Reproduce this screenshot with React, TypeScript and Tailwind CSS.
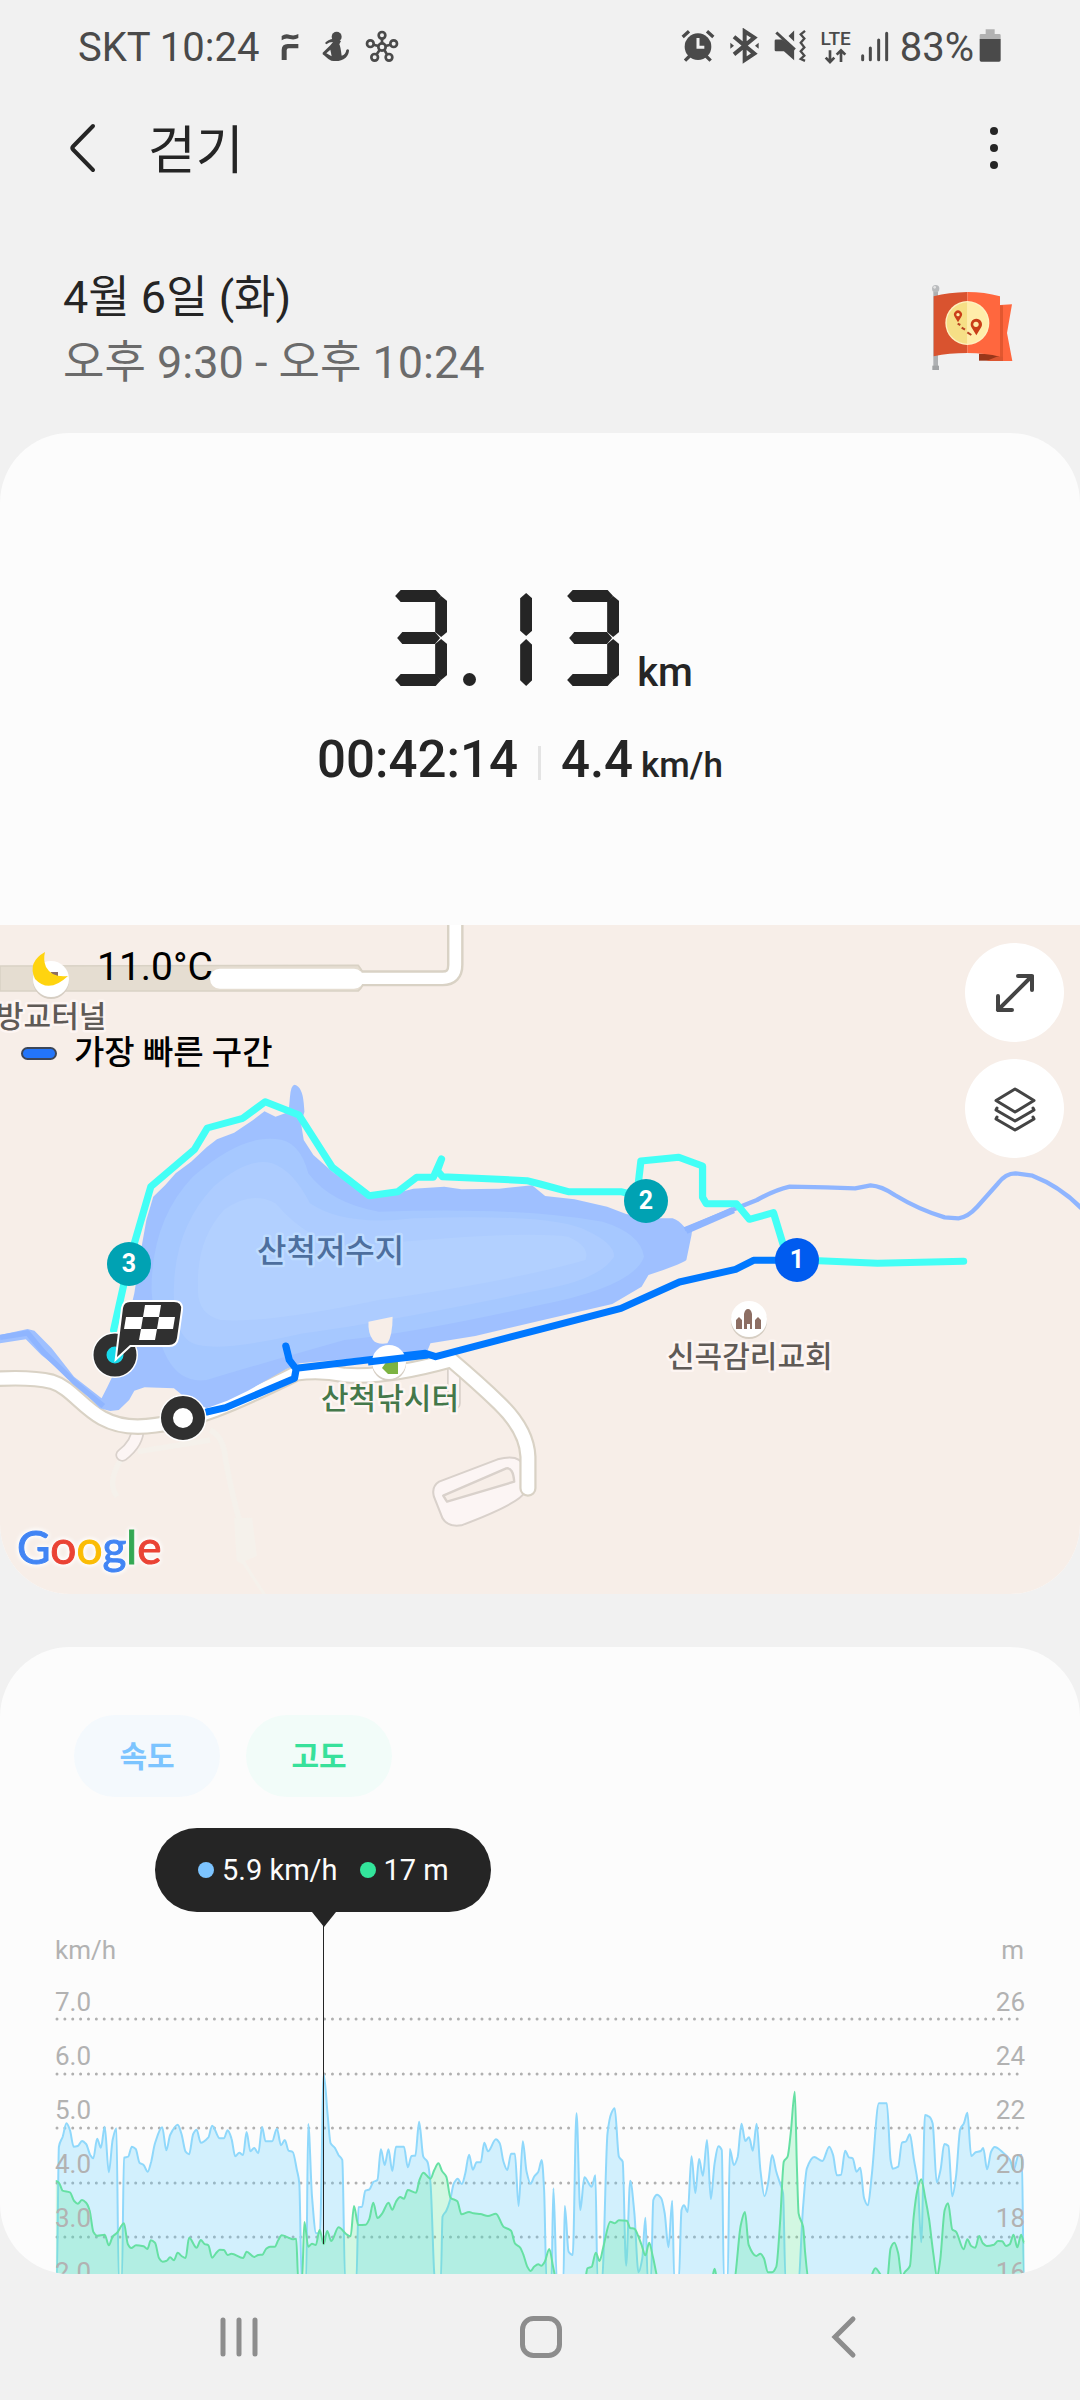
import React from "react";

type Point = [number, number];

/* Chart samples, in the plot's own sample grid (3136 units wide). */
const speedFirst: Point[] = [[165,900],[171,500],[182,470],[193,430],[203,450],[214,500],[226,498],[238,483],[250,492],[262,525],[271,535],[282,476],[293,503],[304,440],[316,577],[327,480],[338,445],[345,900],[354,900],[360,533],[372,530],[383,500],[394,507],[405,548],[417,555],[429,575],[439,545],[450,490],[471,442],[483,511],[494,465],[516,434],[527,462],[539,515],[549,523],[561,462],[571,449],[583,488],[605,472],[616,437],[638,475],[650,475],[661,451],[672,475],[683,529],[695,518],[706,525],[716,456],[727,514],[738,504],[750,520],[761,441],[771,484],[790,484],[804,446],[816,496],[827,480],[838,512],[850,516],[862,570],[869,610],[876,900],[889,900],[895,432],[906,650],[918,760],[929,760],[940,283],[951,400],[960,490],[972,503],[983,525],[994,540],[1002,900],[1035,900],[1041,682],[1051,680],[1061,632],[1073,628],[1084,606],[1096,600],[1106,508],[1117,555],[1128,508],[1139,573],[1150,500],[1173,500],[1184,562],[1195,528],[1206,527],[1217,425],[1229,530],[1241,545],[1250,610],[1263,900],[1280,900],[1285,710],[1296,692],[1307,660],[1318,610],[1329,596],[1341,612],[1351,580],[1362,524],[1373,569],[1384,547],[1396,547],[1406,488],[1417,514],[1440,478],[1451,490],[1462,545],[1473,570],[1484,521],[1495,521],[1506,678],[1518,484],[1529,575],[1541,611],[1551,590],[1563,575]];
const speedSecond: Point[] = [[5,780],[12,870],[19,1140],[33,1140],[39,865],[49,1140],[68,1140],[72,918],[83,1055],[95,1065],[106,640],[117,930],[129,832],[150,860],[161,826],[167,1140],[180,1140],[196,700],[207,640],[217,625],[229,770],[240,785],[250,1097],[262,842],[274,940],[286,1117],[297,1075],[306,953],[313,1140],[322,1140],[329,900],[340,884],[352,895],[362,940],[373,1042],[384,902],[390,1140],[403,1140],[411,930],[418,916],[429,936],[440,769],[451,879],[462,777],[473,827],[485,720],[496,897],[507,790],[518,739],[528,750],[534,1140],[545,1140],[551,747],[563,795],[574,770],[585,671],[596,723],[607,712],[618,752],[629,671],[640,810],[652,889],[663,845],[674,765],[686,815],[697,850],[706,880],[713,1140],[750,1140],[764,920],[775,805],[796,771],[820,783],[840,740],[851,765],[862,826],[874,824],[886,752],[897,772],[908,775],[919,815],[930,803],[941,895],[952,916],[963,830],[984,610],[1007,610],[1018,780],[1024,806],[1040,800],[1051,728],[1062,725],[1074,703],[1085,775],[1097,850],[1107,1027],[1118,645],[1130,650],[1140,670],[1152,847],[1163,810],[1174,732],[1186,738],[1197,889],[1208,830],[1220,688],[1231,670],[1241,638],[1252,768],[1265,757],[1280,753],[1287,744],[1298,808],[1310,755],[1320,741],[1345,758],[1365,780],[1375,810],[1390,765],[1399,765],[1405,1140]];
const heightFirst: Point[] = [[162,603],[171,608],[182,632],[203,637],[215,662],[226,671],[238,660],[250,668],[260,690],[271,755],[282,767],[304,764],[316,796],[327,770],[340,758],[360,730],[371,792],[381,804],[395,796],[417,799],[428,807],[438,781],[450,788],[462,835],[472,845],[484,842],[494,832],[505,841],[516,818],[527,828],[539,834],[549,773],[571,803],[583,780],[594,792],[605,796],[616,833],[627,820],[638,809],[650,810],[661,825],[672,821],[706,834],[716,815],[738,831],[750,825],[762,824],[773,806],[784,800],[798,800],[808,780],[818,766],[838,773],[850,778],[860,776],[866,900],[877,900],[884,726],[895,800],[906,791],[917,795],[928,750],[940,793],[950,753],[962,783],[983,742],[1005,762],[1018,769],[1028,678],[1040,735],[1062,734],[1072,718],[1084,668],[1096,714],[1110,700],[1128,668],[1139,689],[1150,665],[1162,651],[1173,656],[1184,630],[1208,638],[1218,600],[1229,578],[1250,596],[1261,570],[1273,550],[1284,574],[1296,590],[1308,653],[1328,664],[1340,703],[1362,696],[1375,700],[1395,702],[1417,708],[1440,701],[1462,740],[1484,752],[1495,790],[1510,802],[1520,825],[1532,862],[1541,873],[1551,860],[1563,853]];
const heightSecond: Point[] = [[4,1097],[14,1085],[27,1047],[38,1100],[48,1140],[130,1140],[138,1105],[150,1100],[162,1058],[173,1083],[184,1040],[204,965],[217,970],[229,961],[252,962],[262,984],[274,986],[284,1005],[295,1035],[306,1066],[317,1028],[328,1072],[345,1140],[498,1140],[507,1106],[515,1140],[563,1140],[583,975],[595,936],[606,1035],[628,1068],[640,1061],[650,1075],[662,1117],[674,1117],[686,1100],[697,970],[708,785],[719,770],[728,700],[740,575],[746,800],[751,940],[764,980],[770,1060],[780,1140],[955,1140],[974,1105],[990,1125],[1008,1140],[1018,1045],[1029,1028],[1040,1060],[1050,1130],[1060,1115],[1074,1098],[1085,950],[1096,870],[1107,838],[1118,890],[1130,960],[1142,1060],[1153,1130],[1162,1080],[1175,930],[1185,910],[1197,988],[1208,995],[1230,1048],[1241,1018],[1252,1038],[1264,1043],[1275,1008],[1286,1030],[1297,1038],[1318,1034],[1330,1023],[1342,1024],[1353,1038],[1364,1033],[1375,1004],[1386,1042],[1397,1004],[1406,1028]];

const join = (first: Point[], second: Point[]): Point[] =>
  [...first, ...second.map(([x, y]): Point => [x + 1568, y - 240])].map(
    ([x, y]): Point => [(x * 1080) / 3136, y / 3 + 152],
  );

/* Monotone cubic curve: flat at every local extreme. */
function curve(points: Point[]): string {
  const slope = points.map((_, i) => {
    if (i === 0 || i === points.length - 1) return 0;
    const a = (points[i][1] - points[i - 1][1]) / (points[i][0] - points[i - 1][0]);
    const b = (points[i + 1][1] - points[i][1]) / (points[i + 1][0] - points[i][0]);
    return a * b <= 0 ? 0 : (2 * a * b) / (a + b);
  });
  let d = `M${points[0][0].toFixed(1)} ${points[0][1].toFixed(1)}`;
  for (let i = 1; i < points.length; i++) {
    const [x0, y0] = points[i - 1];
    const [x1, y1] = points[i];
    const h = (x1 - x0) / 3;
    d += `C${(x0 + h).toFixed(1)} ${(y0 + slope[i - 1] * h).toFixed(1)} ${(x1 - h).toFixed(1)} ${(y1 - slope[i] * h).toFixed(1)} ${x1.toFixed(1)} ${y1.toFixed(1)}`;
  }
  return d;
}

const speedLine = curve(join(speedFirst, speedSecond));
const heightLine = curve(join(heightFirst, heightSecond));

const rows = [
  { speed: "7.0", height: "26" },
  { speed: "6.0", height: "24" },
  { speed: "5.0", height: "22" },
  { speed: "4.0", height: "20" },
  { speed: "3.0", height: "18" },
  { speed: "2.0", height: "16" },
];

function StatusBar() {
  return (
    <div className="flex items-center justify-between pt-6 pr-[79px] pl-[78px] text-[40px] leading-[48px] text-[#4a4a4a]">
      <div className="flex items-center">
        <span>SKT 10:24</span>
        <svg viewBox="656 54 66 120" className="ml-5 h-10 w-[22px]" fill="currentColor" aria-hidden="true">
          <path d="M664 78q12-9 25-3 13 4 25-3v12q-12 7-25 3-13-5-25 4zM664 150v-30q0-18 18-18h32v13h-29q-6 0-6 6v29z" />
        </svg>
        <svg viewBox="786 54 90 120" className="ml-5 h-10 w-[30px]" fill="currentColor" aria-hidden="true">
          <circle cx="833" cy="80" r="15" />
          <path d="M824 86q-18 2-26 13l4 4q8-7 20-7l-8 10-23 22q-2 5 4 8 12 12 22 16 26 5 43-9 10-9 10-23-4-4-8 0-2 14-14 17-4-30-7-34l5-10z" />
          <path d="M802 130l12-11 4 20z" fill="#f1f1f1" />
        </svg>
        <svg viewBox="920 54 102 120" className="ml-[14px] h-10 w-[34px]" fill="none" stroke="currentColor" strokeWidth="8" aria-hidden="true">
          <circle cx="971" cy="111" r="11" />
          <circle cx="971" cy="76" r="10" /><circle cx="936" cy="101" r="10" /><circle cx="1006" cy="101" r="10" />
          <circle cx="949" cy="142" r="10" /><circle cx="992" cy="142" r="10" />
          <path d="M971 86v14M946 104l14 4M996 104l-14 4M955 133l9-13M986 133l-8-13" />
        </svg>
      </div>
      <div className="flex items-center">
        <svg viewBox="120 54 102 120" className="h-10 w-[34px]" fill="none" stroke="currentColor" aria-hidden="true">
          <circle cx="171" cy="110" r="40" fill="currentColor" stroke="none" />
          <path d="M125 81l19-17M217 81l-19-17M132 152l14-14M209 152l-14-14" strokeWidth="10" />
          <path d="M171 84v28h19" stroke="#f1f1f1" strokeWidth="9" />
        </svg>
        <svg viewBox="264 54 93 120" className="ml-[14px] h-10 w-[31px]" fill="none" stroke="currentColor" strokeWidth="12" aria-hidden="true">
          <path d="M279 80l61 51-29 19V64l29 19-61 50" />
          <path d="M268 98l11 9-11 9zM353 98l-11 9 11 9z" fill="currentColor" stroke="none" />
        </svg>
        <svg viewBox="398 54 100 120" className="ml-[14px] h-10 w-[33px]" fill="none" stroke="currentColor" aria-hidden="true">
          <path d="M404 88h18l37 30v33l-31-27h-24q-4 0-4-4V92q0-4 4-4zM442 78l17-17v33z" fill="currentColor" stroke="none" />
          <path d="M405 67l56 52" strokeWidth="9" />
          <path d="M492 62l-13 11 11 12-11 13 11 14-11 12 11 13-11 10 13 6" strokeWidth="7" />
        </svg>
        <div className="ml-[13px] flex h-10 flex-col items-center text-[19px] leading-[18px] font-medium">
          <span className="mt-[2px]">LTE</span>
          <svg viewBox="550 114 70 48" className="h-4 w-6" fill="none" stroke="currentColor" strokeWidth="8" aria-hidden="true">
            <path d="M567 121v34M554 143l13 13 13-13M600 156v-34M587 134l13-13 13 13" />
          </svg>
        </div>
        <svg viewBox="660 54 90 120" className="ml-[9px] h-10 w-[30px]" stroke="currentColor" strokeWidth="9" strokeLinecap="round" aria-hidden="true">
          <path d="M668 137v12M691 114v35M716 90v59M740 70v79" />
        </svg>
        <span className="ml-[10px]">83%</span>
        <svg viewBox="1018 54 66 120" className="ml-[5px] h-10 w-[22px]" aria-hidden="true">
          <path d="M1020 88V76q0-4 4-4h14V58h27v14h14q4 0 4 4v12z" fill="#b2b2b2" />
          <path d="M1020 87h63v63q0 5-5 5h-53q-5 0-5-5z" fill="#4a4a4a" />
        </svg>
      </div>
    </div>
  );
}

function FlagBadge() {
  return (
    <svg viewBox="90 66 252 270" className="mt-[17px] h-[90px] w-[84px] self-start" role="img" aria-label="경로 목표">
      <path d="M100 96h14v224h-14z" fill="#aeb0b2" />
      <path d="M97 317h20v13H97z" fill="#a1a3a5" />
      <circle cx="107" cy="86" r="11" fill="#b9bbbd" />
      <circle cx="104" cy="82" r="4" fill="#e4e4e4" />
      <path d="M290 136l46-3-15 86 16 84h-47z" fill="#ff673e" />
      <path d="M299 136h10v166h-10z" fill="#e2572f" />
      <path d="M237 281h62v21h-62z" fill="#99371a" />
      <path d="M290 290h19v13h-50z" fill="#db5530" />
      <path d="M101 109q45-12 101-13v183q-55 0-101 10z" fill="#d9532f" />
      <path d="M202 96q52 0 98 13v181q-44-11-98-11z" fill="#ff673e" />
      <circle cx="202" cy="189" r="66" fill="#fff0c0" />
      <path d="M202 127a62 62 0 0 0 0 124z" fill="#f6df86" />
      <path d="M202 127a62 62 0 0 1 0 124z" fill="#ffedaa" />
      <path d="M174 187l-10-17a12 12 0 1 1 20 0zM229 226l-15-25a17 17 0 1 1 30 0z" fill="#ca3e18" />
      <circle cx="174" cy="164" r="5" fill="#ffedaa" />
      <circle cx="228" cy="193" r="8" fill="#ffedaa" />
      <path d="M173 191l8 4M185 203l10 6M202 217l12 8" stroke="#b94422" strokeWidth="6" />
    </svg>
  );
}

const segH = "[clip-path:polygon(0_50%,12%_0,88%_0,100%_50%,88%_100%,12%_100%)]";
const segV = "[clip-path:polygon(50%_0,100%_12%,100%_88%,50%_100%,0_88%,0_12%)]";

function Three() {
  return (
    <div className="relative h-24 w-[52px]">
      <i className={`absolute top-0 left-0 h-3 w-[46px] bg-[#252525] ${segH}`} />
      <i className={`absolute top-[42px] left-[2px] h-3 w-[43px] bg-[#252525] ${segH}`} />
      <i className={`absolute bottom-0 left-0 h-3 w-[46px] bg-[#252525] ${segH}`} />
      <i className={`absolute top-[6px] right-0 h-[41px] w-3 bg-[#252525] ${segV}`} />
      <i className={`absolute right-0 bottom-[6px] h-[41px] w-3 bg-[#252525] ${segV}`} />
    </div>
  );
}

function One() {
  return (
    <div className="flex h-24 flex-col justify-between pt-[3px]">
      <i className={`h-[43px] w-3 bg-[#252525] ${segV}`} />
      <i className={`h-[47px] w-3 bg-[#252525] ${segV}`} />
    </div>
  );
}

function Summary() {
  return (
    <div className="flex flex-col items-center pt-[157px] pb-[129px] font-medium text-[#252525]">
      <div className="flex items-end pl-2">
        <span className="sr-only">3.13</span>
        <div className="flex items-end" aria-hidden="true">
          <Three />
          <i className="ml-4 size-[13px] rounded-full bg-[#252525]" />
          <div className="ml-11"><One /></div>
          <div className="ml-[35px]"><Three /></div>
        </div>
        <span className="ml-[18px] text-[40px] leading-[26px]">km</span>
      </div>
      <div className="mt-11 flex items-baseline pr-10 leading-[60px]">
        <span className="text-[51px]">00:42:14</span>
        <i className="mx-5 h-[34px] w-[3px] self-center bg-[#e4e4e4]" />
        <span className="text-[51px]">4.4</span>
        <span className="ml-2 text-[35px]">km/h</span>
      </div>
    </div>
  );
}

function Terrain() {
  return (
    <svg viewBox="0 45 3136 2007" preserveAspectRatio="none" className="absolute inset-0 h-full w-full" fill="none" strokeLinejoin="round" aria-hidden="true">
      {/* footpaths */}
      <g stroke="#f5f1eb" strokeWidth="16">
        <path d="M400 1625L610 1590M350 1650Q310 1720 340 1760M610 1560Q650 1580 655 1650Q675 1760 695 1830" />
        <path d="M680 1825l52-2 14 115-35 15 30 50 32 50-8 5-60-95-18-10z" fill="#f5f1eb" stroke="none" />
      </g>
      {/* tunnel and upper road */}
      <path d="M0 168L1040 166Q1058 190 1058 206Q1055 232 1040 243L0 243z" fill="#e5ddd1" stroke="#d9d2c5" strokeWidth="5" />
      <path d="M1040 205H1285Q1322 205 1322 165V30" stroke="#d9d2c5" strokeWidth="48" />
      <path d="M1040 205H1285Q1322 205 1322 165V30" stroke="#fff" strokeWidth="34" />
      <rect x="610" y="176" width="446" height="60" rx="28" fill="#fff" />
      {/* minor lanes */}
      <path d="M400 1555Q400 1600 355 1635M1318 1360V1480" stroke="#d9d1cb" strokeWidth="40" strokeLinecap="round" />
      <path d="M400 1555Q400 1600 355 1635M1318 1360V1480" stroke="#fcf5f4" strokeWidth="30" strokeLinecap="round" />
      <path d="M1275 1715L1445 1648Q1530 1625 1522 1700L1525 1745Q1510 1780 1340 1846Q1300 1852 1285 1825L1260 1760Q1252 1730 1275 1715z" fill="#fcf5f4" stroke="#d9d1cb" strokeWidth="6" />
      <path d="M1287 1757L1470 1675Q1490 1672 1493 1715L1298 1775z" fill="#f7eee8" stroke="#d9d1cb" strokeWidth="7" />
      {/* lakeside road */}
      <g>
        <path d="M-20 1407Q90 1400 150 1415C230 1440 260 1550 400 1550C560 1545 720 1460 860 1390Q930 1380 1000 1395Q1120 1405 1310 1350Q1390 1420 1450 1480Q1530 1560 1533 1640V1735" stroke="#d9d2c5" strokeWidth="50" strokeLinecap="round" />
        <path d="M-20 1407Q90 1400 150 1415C230 1440 260 1550 400 1550C560 1545 720 1460 860 1390Q930 1380 1000 1395Q1120 1405 1310 1350Q1390 1420 1450 1480Q1530 1560 1533 1640V1735" stroke="#fff" strokeWidth="37" strokeLinecap="round" />
      </g>
      {/* lake */}
      <path d="M413 1000L425 930L445 860L480 825L510 790L555 755L600 712L630 688L680 668L735 630L768 604L800 620L838 606L842 560Q845 524 856 524Q878 530 882 580L884 605L874 640L882 690L910 735L965 785L1072 862L1155 848L1200 836L1290 830L1340 838L1450 836L1545 826L1583 858L1668 868L1763 890L1818 912L1898 925L1953 925Q1970 930 1988 952L2012 945L2008 975L1993 1050Q1980 1062 1883 1095L1863 1130L1778 1182L1568 1232L1380 1278L1250 1300L1240 1325L870 1360L830 1378L720 1442L660 1472L600 1495L540 1465L505 1435L420 1432L390 1442L375 1470L345 1500L320 1503L290 1495L210 1410L120 1335L75 1288L0 1300V1275L80 1257L100 1262L150 1315L215 1400L295 1465L312 1430L340 1370L390 1150z" fill="#9fc0ff" />
      <path d="M0 1282L80 1269L125 1325L215 1415L300 1488" stroke="#8fb5ff" strokeWidth="16" />
      <path d="M440 1140Q440 930 560 800Q700 675 800 687Q870 690 895 790Q960 880 1100 905Q1500 890 1750 935Q1860 970 1870 1040Q1840 1130 1568 1185Q1200 1270 1000 1290Q760 1360 600 1410Q460 1430 440 1140z" fill="#a6c8ff" />
      <path d="M505 1130Q510 950 620 830Q720 740 790 760Q850 780 900 880Q1000 950 1200 925Q1600 910 1700 960Q1785 1000 1783 1040Q1740 1110 1568 1140Q1100 1240 880 1270Q630 1330 560 1300Q500 1270 505 1130z" fill="#adccff" />
      <path d="M575 1130Q570 990 650 900Q730 840 800 880Q900 1000 1020 1010Q1500 960 1650 980Q1715 1010 1700 1050Q1500 1110 1100 1170Q780 1240 640 1230Q570 1210 575 1130z" fill="#b2d0ff" />
      <path d="M1070 1235l70-15q0 55-15 80-30 5-42-10-15-20-13-55z" fill="#f7eee8" />
      {/* stream */}
      <path d="M1988 958L2138 895L2198 870Q2250 840 2293 830L2398 832L2483 835L2528 826Q2560 828 2598 855Q2670 900 2743 922L2783 925Q2810 922 2838 890L2898 820Q2920 790 2948 790L2998 797Q3080 830 3140 895" stroke="#8fb5ff" strokeWidth="13" />
      <path d="M1992 962L2130 900" stroke="#8fb5ff" strokeWidth="20" />
      {/* walked route */}
      <g stroke="#43fff6" strokeWidth="21" strokeLinecap="round">
        <path d="M330 1260L358 1130L390 1000L438 830L565 718L602 654L705 625L770 575L868 615L965 772L1072 857L1155 845L1210 802L1258 802L1282 747L1270 782L1285 800L1530 812L1568 822L1650 845H1803L1830 852" />
        <path d="M1854 815L1861 753L1971 742L2040 768V862L2051 881H2138L2176 928L2246 908L2276 1010" />
        <path d="M2378 1052L2548 1060L2798 1054" />
      </g>
      <path d="M600 1506L655 1493L855 1405L860 1377L840 1350L830 1308M860 1377V1375L1235 1330L1265 1340L1568 1258L1803 1195L1973 1116L2136 1078L2188 1051H2270" stroke="#0078ff" strokeWidth="21" strokeLinecap="round" />
    </svg>
  );
}

function MapMarks() {
  const halo = { paintOrder: "stroke" as const };
  return (
    <svg viewBox="0 925 1080 669" className="absolute inset-0 h-full w-full" role="img" aria-label="산척저수지 산책 경로 지도">
      {/* points of interest */}
      <g>
        <circle cx="51" cy="981" r="18" fill="#d6cec3" />
        <circle cx="51" cy="979" r="18" fill="#fff" />
        <path d="M51 972h7v5h-7z" fill="#8d6e63" />
        <path d="M45 952Q27 962 35 979Q49 994 68 976Q52 978 46 967Q43 960 45 952z" fill="#ffd40f" />
        <circle cx="389" cy="1364" r="17" fill="#d6cec3" />
        <circle cx="389" cy="1362" r="17" fill="#fff" />
        <path d="M398 1361v13h-10l-6-6 5-7z" fill="#7cb342" />
        <circle cx="749" cy="1321" r="18" fill="#d6cec3" />
        <circle cx="749" cy="1319" r="18" fill="#fff" />
        <path d="M736 1329v-9l3-3 3 3v9zM755 1329v-9l3-3 3 3v9zM744 1329v-15q1-5 4-5t4 5v15h-2v-5h-3v5z" fill="#8d6e63" />
        <path d="M368 1362L428 1355" stroke="#0078ff" strokeWidth="7" />
      </g>
      <g style={halo} strokeWidth="5" strokeLinejoin="round" fontSize="30" fontWeight="500">
        <text x="-4" y="1027" fill="#5f5a56" stroke="#fdf5f2">방교터널</text>
        <text x="257" y="1262" fontSize="32" fill="#4d6f9e" stroke="#bfdcff">산척저수지</text>
        <text x="321" y="1409" fill="#44784a" stroke="#fdf5f2">산척낚시터</text>
        <text x="667" y="1367" fill="#5f5a56" stroke="#fdf5f2">신곡감리교회</text>
      </g>
      {/* kilometre badges */}
      <g fontSize="25" fontWeight="700" fill="#fff" textAnchor="middle">
        <circle cx="129" cy="1264" r="22" fill="#00a2b3" /><text x="129" y="1272">3</text>
        <circle cx="646" cy="1201" r="22" fill="#00a2b3" /><text x="646" y="1209">2</text>
        <circle cx="797" cy="1260" r="22" fill="#005bef" /><text x="797" y="1268">1</text>
      </g>
      {/* start and finish */}
      <circle cx="183" cy="1418" r="16" fill="#fff" stroke="#fff" strokeWidth="15" />
      <circle cx="183" cy="1418" r="16" fill="#fff" stroke="#303030" strokeWidth="12" />
      <circle cx="115" cy="1355" r="23" fill="#fff" />
      <circle cx="115" cy="1355" r="15" fill="#18d9ea" stroke="#303030" strokeWidth="13" />
      <path d="M130 1302h44q8 0 7 8l-4 28q-1 7-8 7h-39l-13 12 6-49q1-6 7-6z" fill="#303030" stroke="#fff" strokeWidth="4" style={halo} />
      <path d="M145 1305h16l-2 12h-16zM126 1317h17l-2 12h-17zM159 1317h16l-2 12h-16zM141 1329h16l-2 11h-16z" fill="#fff" />
      {/* wordmark */}
      <text x="17" y="1564" fontSize="46" strokeWidth="1" className="font-[Lato,sans-serif] [filter:drop-shadow(0_0_2px_#fff)_drop-shadow(0_0_2px_#fff)]">
        <tspan fill="#4285f4" stroke="#4285f4">G</tspan><tspan fill="#ea4335" stroke="#ea4335">o</tspan><tspan fill="#fbbc05" stroke="#fbbc05">o</tspan><tspan fill="#4285f4" stroke="#4285f4">g</tspan><tspan fill="#34a853" stroke="#34a853">l</tspan><tspan fill="#ea4335" stroke="#ea4335">e</tspan>
      </text>
    </svg>
  );
}

function RouteMap() {
  return (
    <div className="relative aspect-[1080/669] w-full overflow-hidden bg-[#f7eee8]">
      <Terrain />
      <MapMarks />
      <div className="absolute top-[18px] left-0 text-black">
        <p className="pl-[97px] text-[39px] leading-[48px]">11.0°C</p>
        <p className="mt-[38px] flex items-center pl-[21px] text-[33px] leading-[48px] font-medium">
          <i className="mr-[17px] h-[13px] w-9 rounded-full border-2 border-[#3c4658] bg-[#2375fa]" />
          가장 빠른 구간
        </p>
      </div>
      <div className="absolute top-[18px] right-4 flex flex-col gap-[17px]">
        <button type="button" aria-label="지도 확대" className="flex size-[99px] items-center justify-center rounded-full bg-white text-[#444]">
          <svg viewBox="0 0 42 42" className="size-[42px]" fill="none" stroke="currentColor" strokeWidth="4" strokeLinecap="round" strokeLinejoin="round">
            <path d="M24 4h14v14M38 4L4 38M4 24v14h14" />
          </svg>
        </button>
        <button type="button" aria-label="지도 종류" className="flex size-[99px] items-center justify-center rounded-full bg-white text-[#444]">
          <svg viewBox="0 0 46 48" className="h-12 w-[46px]" fill="none" stroke="currentColor" strokeWidth="3" strokeLinecap="round" strokeLinejoin="round">
            <path d="M23 4L42 15.500L23 27L4 15.500zM5 23L4 25L23 36L42 25L41 23M5 32L4 34L23 45L42 34L41 32" />
          </svg>
        </button>
      </div>
    </div>
  );
}

function Chart() {
  return (
    <div className="relative mt-[31px]">
      <svg viewBox="0 0 1080 446" className="block w-full" role="img" aria-label="속도와 고도 그래프">
        {rows.map((row, i) => (
          <path key={row.speed} d={`M57 ${191 + Math.round(i * 54.5)}H1025`} stroke="#b0b0b0" strokeWidth="3" strokeLinecap="round" strokeDasharray="0 7.87" />
        ))}
        <path d={`${speedLine}V480H57z`} fill="#54ccff" fillOpacity="0.25" />
        <path d={speedLine} fill="none" stroke="#8fd8fb" strokeWidth="2" />
        <path d={`${heightLine}V480H56z`} fill="#51eb94" fillOpacity="0.24" />
        <path d={heightLine} fill="none" stroke="#66e0a3" strokeWidth="2" />
        <g fill="#b2b2b2" fontSize="26">
          <text x="55" y="131">km/h</text>
          <text x="1024" y="131" textAnchor="end">m</text>
          {rows.map((row, i) => (
            <React.Fragment key={row.speed}>
              <text x="55" y={183 + Math.round(i * 54)}>{row.speed}</text>
              <text x="1025" y={183 + Math.round(i * 54)} textAnchor="end">{row.height}</text>
            </React.Fragment>
          ))}
        </g>
        <path d="M323.500 98V416" stroke="#252525" strokeWidth="1" />
        <path d="M312 84h24l-12 15z" fill="#252525" />
      </svg>
      <div className="absolute top-0 left-[155px] flex h-[84px] items-center rounded-full bg-[#252525] pr-[42px] pl-[43px] text-[29px] leading-10 text-[#fcfcfc]">
        <i className="mr-2 size-4 rounded-full bg-[#7cc4ff]" />
        5.9 km/h
        <i className="mr-2 ml-[22px] size-4 rounded-full bg-[#33e59b]" />
        17 m
      </div>
    </div>
  );
}

export default function App() {
  return (
    <div className="flex min-h-screen flex-col bg-[#f1f1f1] font-[Roboto,'Noto_Sans_CJK_KR',sans-serif]">
      <StatusBar />

      <header className="mt-9 flex h-20 items-center pr-[66px] pl-[60px] text-[#252525]">
        <button type="button" aria-label="뒤로" className="flex h-16 w-11 items-center justify-center">
          <svg viewBox="0 0 28 50" className="h-[50px] w-7" fill="none" stroke="currentColor" strokeWidth="4" strokeLinecap="round" strokeLinejoin="round">
            <path d="M25 3L5 23.500Q3.500 25 5 26.500L25 47" />
          </svg>
        </button>
        <h1 className="ml-11 pt-2 text-[52px] leading-[64px]">걷기</h1>
        <button type="button" aria-label="옵션 더보기" className="ml-auto flex h-16 w-10 items-center justify-center">
          <svg viewBox="0 0 10 44" className="h-11 w-[10px]" fill="currentColor">
            <circle cx="5" cy="5" r="4" /><circle cx="5" cy="22" r="4" /><circle cx="5" cy="39" r="4" />
          </svg>
        </button>
      </header>

      <section className="mt-[77px] flex items-center justify-between pr-[66px] pb-[38px] pl-[63px] text-[45px] leading-[65px]">
        <div>
          <h2 className="text-[#252525]">4월 6일 (화)</h2>
          <p className="text-[#6b6b6b]">오후 9:30 - 오후 10:24</p>
        </div>
        <FlagBadge />
      </section>

      <main className="flex flex-1 flex-col gap-[53px]">
        <section className="overflow-hidden rounded-[70px] bg-[#fcfcfc]">
          <Summary />
          <RouteMap />
        </section>

        <section className="overflow-hidden rounded-[70px] bg-[#fcfcfc] pt-[68px]">
          <div className="flex gap-[26px] pl-[74px] text-[30px] font-bold">
            <button type="button" className="h-[82px] w-[146px] rounded-full bg-[#f4f9fd] text-[#7cc4ff]">속도</button>
            <button type="button" className="h-[82px] w-[146px] rounded-full bg-[#f2fcf9] text-[#38e19b]">고도</button>
          </div>
          <Chart />
        </section>
      </main>

      <nav className="grid h-[126px] grid-cols-3 items-center justify-items-center pr-[86px] pl-[88px] text-[#8d8d8d]">
        <button type="button" aria-label="최근 앱" className="p-4">
          <svg viewBox="0 0 40 44" className="h-11 w-10" stroke="currentColor" strokeWidth="5" strokeLinecap="round">
            <path d="M4 5v34M20 5v34M36 5v34" />
          </svg>
        </button>
        <button type="button" aria-label="홈" className="p-4">
          <svg viewBox="0 0 44 44" className="size-11" fill="none" stroke="currentColor" strokeWidth="5">
            <rect x="3.500" y="3.500" width="37" height="37" rx="11" />
          </svg>
        </button>
        <button type="button" aria-label="이전" className="p-4">
          <svg viewBox="0 0 28 44" className="h-11 w-7" fill="none" stroke="currentColor" strokeWidth="5" strokeLinecap="round">
            <path d="M24 4L6 22L24 40" />
          </svg>
        </button>
      </nav>
    </div>
  );
}
